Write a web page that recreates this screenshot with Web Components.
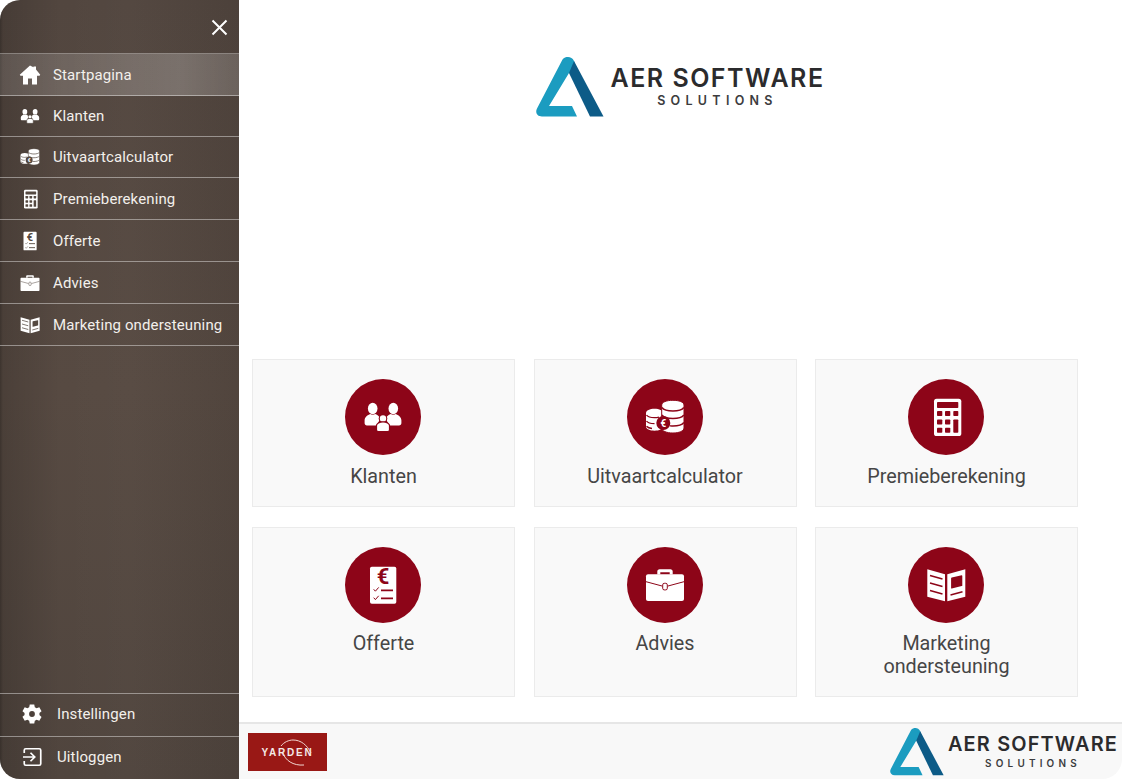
<!DOCTYPE html>
<html lang="nl">
<head>
<meta charset="utf-8">
<title>AER Software Solutions</title>
<style>
  html, body { margin: 0; height: 100%; background: #fff; }
  body { font-family: Roboto, "Liberation Sans", sans-serif; }
</style>
</head>
<body>
<app-shell>
  <side-nav slot="nav">
    <nav-item icon="home" active style="--row: 41.5px; --nudge: 1px">Startpagina</nav-item>
    <nav-item icon="people" style="--row: 41px">Klanten</nav-item>
    <nav-item icon="coins" style="--row: 41.5px">Uitvaartcalculator</nav-item>
    <nav-item icon="calc">Premieberekening</nav-item>
    <nav-item icon="offer">Offerte</nav-item>
    <nav-item icon="case">Advies</nav-item>
    <nav-item icon="book">Marketing ondersteuning</nav-item>
    <nav-item slot="bottom" icon="gear" low>Instellingen</nav-item>
    <nav-item slot="bottom" icon="logout" low>Uitloggen</nav-item>
  </side-nav>

  <aer-logo slot="hero"></aer-logo>

  <tile-card slot="tiles" icon="people">Klanten</tile-card>
  <tile-card slot="tiles" icon="coins">Uitvaartcalculator</tile-card>
  <tile-card slot="tiles" icon="calc">Premieberekening</tile-card>
  <tile-card slot="tiles" icon="offer">Offerte</tile-card>
  <tile-card slot="tiles" icon="case">Advies</tile-card>
  <tile-card slot="tiles" icon="book">Marketing ondersteuning</tile-card>

  <yarden-logo slot="footer"></yarden-logo>
  <aer-logo slot="footer" small></aer-logo>
</app-shell>

<script>
// All icons share a 44x44 box. --cut is the colour behind the icon, for the parts punched out of it
const ICONS = {
  home: `<path d="M22 3 1.5 21.5l1.5 2h5V41h10V29h8v12h10V23.5h5l1.5-2L34 11V5h-5v1.5z"/>`,
  people: `<ellipse cx="11.7" cy="13.5" rx="4.8" ry="5.7"/><ellipse cx="32.3" cy="13.5" rx="4.8" ry="5.7"/>
         <path d="M3.6 28v-2.6c0-3.4 3.2-5.4 5.6-6.4 1.500 1 3.500 1 5 0 2.500 1 4.500 2.600 5.300 5L15 30.500H6c-1.500 0-2.400-1-2.400-2.500z"/>
         <path d="M40.4 28v-2.6c0-3.4-3.2-5.4-5.6-6.4-1.500 1-3.500 1-5 0-2.500 1-4.500 2.600-5.300 5L29 30.500h9c1.500 0 2.400-1 2.400-2.500z"/>
         <circle cx="22" cy="23.5" r="4.300" fill="var(--cut)"/><circle cx="22" cy="23.5" r="3.200"/>
         <path d="M15.5 35v-4.500c0-2 3-3.600 6.500-3.600s6.500 1.600 6.500 3.600V35c0 1-.9 1.700-2 1.700h-9c-1.100 0-2-.7-2-1.700z" stroke="var(--cut)" stroke-width="1.200"/>`,
  coins: `<path d="M3 18v13.500c0 2.500 3.800 4.200 8.500 4.200s8.500-1.700 8.500-4.200V18c0-2.500-3.800-4.200-8.500-4.200S3 15.500 3 18z"/>
         <path d="M3.500 20c1.200 1.800 4.200 2.700 8 2.700 1.600 0 3.200-.2 4.500-.6M3.500 26c1.200 1.800 4.200 2.700 8 2.700M3.500 31.300c1.200 1.300 3 2 5.500 2.200" fill="none" stroke="var(--cut)" stroke-width="1.300"/>
         <path d="M18.700 10v23c0 3 5 5 11.200 5S41 36 41 33V10c0-3-5-4.700-11.100-4.700S18.700 7 18.700 10z" stroke="var(--cut)" stroke-width="1"/>
         <path d="M19 12.500c1.600 2.300 5.800 3.500 10.900 3.500s9.300-1.200 10.900-3.500M19 20c1.600 2.300 5.800 3.500 10.900 3.500s9.300-1.200 10.900-3.500M27 30.800c1 .1 1.900.2 2.900.2 5.100 0 9.300-1.200 10.900-3.500" fill="none" stroke="var(--cut)" stroke-width="1.400"/>
         <circle cx="20.300" cy="28" r="7" fill="var(--cut)"/>
         <text x="20.300" y="31.500" text-anchor="middle" font-size="10" font-weight="700" fill="#fff" font-family="Roboto, sans-serif">€</text>`,
  calc: `<rect x="10" y="3.700" width="27.300" height="37.300" rx="2.600"/>
         <g fill="var(--cut)">
           <rect x="13" y="7" width="21.300" height="6" rx=".8"/>
           <rect x="13" y="16" width="5.300" height="5" rx=".8"/><rect x="21" y="16" width="5.300" height="5" rx=".8"/><rect x="29.300" y="16" width="5" height="5" rx=".8"/>
           <rect x="13" y="24.500" width="5.300" height="5" rx=".8"/><rect x="21" y="24.500" width="5.300" height="5" rx=".8"/>
           <rect x="13" y="32.700" width="5.300" height="5" rx=".8"/><rect x="21" y="32.700" width="5.300" height="5" rx=".8"/>
           <rect x="29.300" y="24.500" width="5" height="13.200" rx=".8"/>
         </g>`,
  offer: `<rect x="9" y="3.700" width="26.300" height="37" rx="1.800"/>
         <text x="22" y="21" text-anchor="middle" font-size="22" font-weight="700" fill="var(--cut)" font-family="Roboto, sans-serif">€</text>
         <path d="M12.700 26.300l1.700 1.900 3.300-3.800M12.700 34.700l1.700 1.900 3.300-3.800" fill="none" stroke="var(--cut)" stroke-width="1"/>
         <path d="M20 27.300h12M20 35.300h12" stroke="var(--cut)" stroke-width="1.800"/>`,
  case: `<path d="M14.300 11.500V8.500c0-1.200 1-2.200 2.200-2.200h11c1.200 0 2.200 1 2.200 2.200v3h-3V9.300H17.300v2.200z"/>
         <path d="M3 13.300c0-1.100.9-2 2-2h34c1.100 0 2 .9 2 2V36c0 1.100-.9 2-2 2H5c-1.100 0-2-.9-2-2z"/>
         <path d="M3 18.700 19 23M41 18.700 25 23" stroke="var(--cut)" stroke-width="1"/>
         <rect x="19.700" y="20.300" width="4.600" height="6.600" rx="1.600" stroke="var(--cut)" stroke-width="1"/>`,
  book: `<path d="M3.300 6.300 21 11.300v27L3.300 33.700z"/><path d="M41.300 6.300 23.300 11.300v27l18-4.600z"/>
         <path d="M6 12.500 18.500 16M6 20 18.500 23.500M6 27.500 18.500 31" stroke="var(--cut)" stroke-width="1.500"/>
         <path d="M27.800 14.500 37.700 12.300c.4 0 .6.300.6.600v9.500c0 .4-.2.600-.6.700L27.800 25.500c-.4.100-.7-.2-.7-.6V15.200c0-.3.300-.6.700-.7z" fill="var(--cut)"/>
         <path d="M26.500 32 38.500 28.700" stroke="var(--cut)" stroke-width="1.500"/>`,
  gear: `<path fill-rule="evenodd" d="M17.500 2h9l1.100 5.600c1.300.4 2.500 1 3.600 1.800l5.400-1.900 4.500 7.800-4.300 3.700c.3 1.300.3 2.800 0 4.100l4.300 3.700-4.500 7.800-5.400-1.900c-1.100.8-2.300 1.400-3.600 1.800L26.500 40h-9l-1.100-5.600c-1.300-.4-2.500-1-3.600-1.800l-5.400 1.900-4.500-7.800 4.300-3.700c-.3-1.300-.3-2.800 0-4.100L2.900 15.300l4.500-7.800 5.400 1.900c1.100-.8 2.300-1.400 3.600-1.800zM22 15.200a5.800 5.800 0 1 0 0 11.600 5.800 5.800 0 0 0 0-11.600z" transform="translate(0 1)"/>`,
  logout: `<path d="M6.500 14V8.500c0-1.700 1.300-3 3-3h27c1.700 0 3 1.300 3 3v27c0 1.700-1.300 3-3 3h-27c-1.700 0-3-1.300-3-3V30" fill="none" stroke="currentColor" stroke-width="3.400"/>
         <path d="M4 22h23M19 13.500l8.500 8.500-8.500 8.500" fill="none" stroke="currentColor" stroke-width="3.400"/>`
};

// Small helper so every shadow root is created the same way
function shadow(el, html) {
  el.attachShadow({ mode: "open" }).innerHTML = html;
}

class AppIcon extends HTMLElement {
  connectedCallback() {
    shadow(this, `
      <style>
        :host { display: block; width: var(--icon-size, 22px); height: var(--icon-size, 22px); color: #fff; flex: none; }
        svg { display: block; width: 100%; height: 100%; fill: currentColor; }
      </style>
      <svg viewBox="0 0 44 44" aria-hidden="true">${ICONS[this.getAttribute("name")] || ""}</svg>`);
  }
}
customElements.define("app-icon", AppIcon);

class AppShell extends HTMLElement {
  constructor() {
    super();
    shadow(this, `
      <style>
        :host { display: flex; height: 100vh; border-radius: 20px; overflow: hidden; background: #fff; }
        main { flex: 1; min-width: 0; display: flex; flex-direction: column; }
        .hero { flex: 1; display: flex; justify-content: center; align-items: flex-start; padding-top: 57px; }
        .tiles { display: grid; grid-template-columns: repeat(3, 263px); column-gap: 18.5px; row-gap: 20px; padding: 0 44px 25.5px 13px; }
        footer { flex: none; height: 57px; box-sizing: border-box; border-top: 2px solid #e6e6e6; background: #f8f8f8;
                 display: flex; justify-content: space-between; align-items: flex-start; padding: 9px 4px 0 9px; }
      </style>
      <slot name="nav"></slot>
      <main>
        <div class="hero"><slot name="hero"></slot></div>
        <div class="tiles"><slot name="tiles"></slot></div>
        <footer><slot name="footer"></slot></footer>
      </main>`);
  }
}
customElements.define("app-shell", AppShell);

class SideNav extends HTMLElement {
  constructor() {
    super();
    shadow(this, `
      <style>
        :host { display: flex; flex-direction: column; flex: none; width: 239px; height: 100%; box-sizing: border-box;
                --cut: #554941; color: #f3f0ec;
                background:
                  linear-gradient(90deg, rgba(0,0,0,.3) 0, rgba(0,0,0,.14) 3px, rgba(0,0,0,0) 60px, rgba(255,255,255,.01) 130px, rgba(0,0,0,.07) 100%),
                  linear-gradient(180deg, #52463f 0, #574a42 50%, #50453e 100%); }
        .head { height: 53px; flex: none; display: flex; justify-content: flex-end; align-items: center; padding: 2px 11px 0 0; box-sizing: border-box; }
        .close { display: block; width: 17px; height: 17px; }
        .close path { stroke: #fff; stroke-width: 2; }
        .items { flex: 1; border-top: 1px solid rgba(255,255,255,.35); }
        .bottom { flex: none; }
      </style>
      <div class="head">
        <svg class="close" viewBox="0 0 17 17"><path d="M1.5 1.5l14 14M15.5 1.5l-14 14"/></svg>
      </div>
      <div class="items"><slot></slot></div>
      <div class="bottom"><slot name="bottom"></slot></div>`);
  }
}
customElements.define("side-nav", SideNav);

class NavItem extends HTMLElement {
  connectedCallback() {
    shadow(this, `
      <style>
        :host { display: flex; align-items: center; box-sizing: border-box; height: var(--row, 42px); padding: var(--nudge, .5px) 0 0 18.5px; gap: 12.5px;
                border-bottom: 1px solid rgba(255,255,255,.42); font-size: 15px; letter-spacing: .12px; white-space: nowrap; }
        :host([active]) { background: linear-gradient(90deg, rgba(255,255,255,.12), rgba(255,255,255,.23) 75%, rgba(255,255,255,.17)); --cut: #75695f; }
        :host([low]) { height: 43px; padding: 0 0 2px 20.5px; gap: 14.5px; border-bottom: 0; border-top: 1px solid rgba(255,255,255,.42); }
      </style>
      <app-icon name="${this.getAttribute("icon")}"></app-icon>
      <slot></slot>`);
  }
}
customElements.define("nav-item", NavItem);

class TileCard extends HTMLElement {
  connectedCallback() {
    shadow(this, `
      <style>
        :host { display: flex; flex-direction: column; align-items: center; box-sizing: border-box; padding: 19px 50px 17.25px;
                background: #f9f9f9; border: 1px solid #ebebeb; color: #464646; font-size: 19.75px; line-height: 22.5px; text-align: center; }
        .disc { width: 76px; height: 76px; border-radius: 50%; background: #8d0518; display: flex; align-items: center; justify-content: center;
                --cut: #8d0518; --icon-size: 44px; margin: 0 1px 10.75px 0; }
      </style>
      <div class="disc"><app-icon name="${this.getAttribute("icon")}"></app-icon></div>
      <slot></slot>`);
  }
}
customElements.define("tile-card", TileCard);

class AerLogo extends HTMLElement {
  connectedCallback() {
    shadow(this, `
      <style>
        :host { display: flex; align-items: flex-start; gap: 6px; --s: 1; font-family: Inter, "Liberation Sans", sans-serif; color: #2b2b2d; }
        :host([small]) { --s: .795; gap: 4px; margin-top: -5px; }
        svg { display: block; flex: none; width: calc(68px * var(--s)); height: calc(60px * var(--s)); }
        .text { display: flex; flex-direction: column; align-items: center; padding-top: calc(6px * var(--s)); white-space: nowrap; }
        .name { font-size: calc(25px * var(--s)); line-height: calc(30px * var(--s)); font-weight: 600; letter-spacing: calc(1.5px * var(--s)); }
        .sub { font-size: calc(12.5px * var(--s)); line-height: calc(16px * var(--s)); font-weight: 600; letter-spacing: calc(5.3px * var(--s)); color: #3c3c3e; }
      </style>
      <svg viewBox="0 0 68 60">
        <path fill="#1b9cc0" d="M26.5 2.5C28 .5 30 0 32 0c2.5 0 4.5 1 6 4l3 10-8 2-20 33h23l5 10.5H6c-5 0-7-4-5-8z"/>
        <path fill="#0d5b87" d="M38 4l29.5 55.5H54L33 16z"/>
      </svg>
      <div class="text"><span class="name">AER SOFTWARE</span><span class="sub">SOLUTIONS</span></div>`);
  }
}
customElements.define("aer-logo", AerLogo);

class YardenLogo extends HTMLElement {
  constructor() {
    super();
    shadow(this, `
      <style>
        :host { display: block; position: relative; width: 79px; height: 38px; background: #991815; }
        span { position: absolute; inset: 0; display: flex; align-items: center; justify-content: center; color: #f5e9e6;
               font: 700 10px "Liberation Sans", sans-serif; letter-spacing: 1.8px; padding-top: 1px; }
        svg { position: absolute; inset: 0; width: 100%; height: 100%; }
      </style>
      <span>YARDEN</span>
      <svg viewBox="0 0 79 38" fill="none" stroke="#f2d6d0" stroke-width="1">
        <path d="M33 13c3-4 8-6 12-6 8 0 14 5 18 13"/>
        <path d="M35 20c2 7 10 13 21 12"/>
      </svg>`);
  }
}
customElements.define("yarden-logo", YardenLogo);
</script>
</body>
</html>
